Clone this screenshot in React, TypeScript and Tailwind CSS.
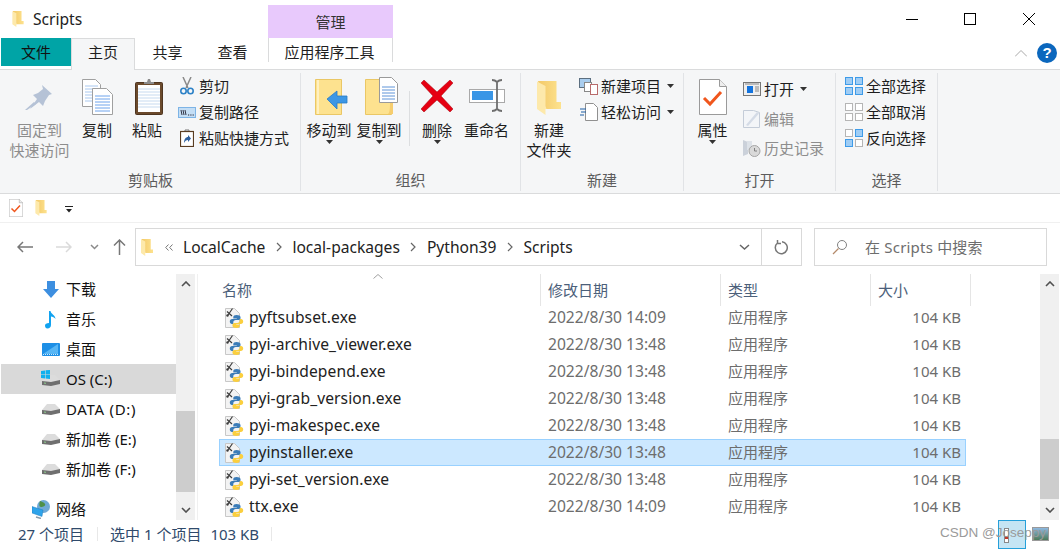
import React from "react";

const files = [
  { name: "pyftsubset.exe", date: "2022/8/30 14:09" },
  { name: "pyi-archive_viewer.exe", date: "2022/8/30 13:48" },
  { name: "pyi-bindepend.exe", date: "2022/8/30 13:48" },
  { name: "pyi-grab_version.exe", date: "2022/8/30 13:48" },
  { name: "pyi-makespec.exe", date: "2022/8/30 13:48" },
  { name: "pyinstaller.exe", date: "2022/8/30 13:48", selected: true },
  { name: "pyi-set_version.exe", date: "2022/8/30 13:48" },
  { name: "ttx.exe", date: "2022/8/30 14:09" },
];

const Caret = ({ className = "" }: { className?: string }) => (
  <svg width="7" height="4" viewBox="0 0 7 4" className={className}>
    <path d="M0 0h7L3.5 4z" fill="#333" />
  </svg>
);

const Folder = ({ w = 14, h = 18 }: { w?: number; h?: number }) => (
  <svg width={w} height={h} viewBox="0 0 24 34">
    <defs>
      <linearGradient id="folderBody" x1="0" y1="0" x2="1" y2="0">
        <stop offset="0" stopColor="#f3c968" />
        <stop offset="1" stopColor="#fde28e" />
      </linearGradient>
    </defs>
    <path d="M1 0h18.500v21H24v7H8z" fill="url(#folderBody)" />
    <path d="M0 .5l8.500 4.500v20l1 3H8.500V34L0 28z" fill="#fde9ab" />
  </svg>
);

const CheckDoc = ({ w = 28, h = 36 }: { w?: number; h?: number }) => (
  <svg width={w} height={h} viewBox="0 0 28 36">
    <path d="M.5.5h20l7 7v28H.5z" fill="#fff" stroke="#9a9a9a" />
    <path d="M20.5.5v7h7" fill="#eee" stroke="#9a9a9a" />
    <path d="M5 19l6 6L22 13" fill="none" stroke="#f0561d" strokeWidth="3" />
  </svg>
);

const snake =
  "M12.500 8c-2 0-3.200.7-3.200 2v1.500h3.500v.6H8.200c-1.500 0-2.400 1-2.400 2.500s.9 2.500 2.100 2.500h1.400v-1.800c0-1.200 1-2.200 2.400-2.200h3c1 0 1.800-.8 1.800-1.800V10c0-1.300-1.700-2-4-2z";

const PythonFile = () => (
  <svg width="20" height="22" viewBox="0 0 20 22" className="shrink-0">
    <path d="M1.500 1.500h9l5 5v14h-14z" fill="#f3f3f3" stroke="#c8c8c8" />
    <path d="M3 4.500l5 4.500M8.500 1.500L4 8" stroke="#3d3d3d" strokeWidth="1.200" fill="none" />
    <circle cx="3.500" cy="8.500" r="1.200" fill="#3d3d3d" />
    <path d={snake} fill="#3b7cb8" />
    <path d={snake} fill="#fbcf3e" transform="rotate(180 12.5 14.5)" />
  </svg>
);

const Drive = () => (
  <svg width="18" height="12" viewBox="0 0 18 12">
    <path d="M0 7L5 1h8l5 5v3H0z" fill="#dcdcdc" />
    <path d="M0 7l9 1 9-2v4l-9 2-9-1z" fill="#6f6f6f" />
    <path d="M2 9l2 .3" stroke="#8fd18f" strokeWidth="1" />
  </svg>
);

const BigButton = ({
  icon,
  label,
  caret,
  gray,
  width,
}: {
  icon: React.ReactNode;
  label: React.ReactNode;
  caret?: boolean;
  gray?: boolean;
  width: number;
}) => (
  <div className="flex flex-col items-center shrink-0" style={{ width }}>
    <div className="h-[47px] flex items-end justify-center pb-[5px]">{icon}</div>
    <div className={`text-center leading-[20px] whitespace-nowrap ${gray ? "text-[#8d8d8d]" : "text-[#1e1e1e]"}`}>
      {label}
    </div>
    {caret && <Caret />}
  </div>
);

const SmallRow = ({
  icon,
  label,
  caret,
  gray,
  rowClass = "h-[26px]",
}: {
  icon: React.ReactNode;
  label: string;
  caret?: boolean;
  gray?: boolean;
  rowClass?: string;
}) => (
  <div className={`flex items-center whitespace-nowrap ${rowClass} ${gray ? "text-[#8d8d8d]" : "text-[#1e1e1e]"}`}>
    <div className="w-[21px] shrink-0 flex items-center justify-center mr-[2px]">{icon}</div>
    <span>{label}</span>
    {caret && <Caret className="ml-[6px]" />}
  </div>
);

const Group = ({
  width,
  label,
  children,
}: {
  width: number;
  label: string;
  children: React.ReactNode;
}) => (
  <div className="flex flex-col shrink-0 h-[118px] border-r border-[#e1e3e6]" style={{ width }}>
    <div className="flex h-[96px]">{children}</div>
    <div className="h-[22px] flex items-center justify-center text-[#5c5c5c]">{label}</div>
  </div>
);

const Grid = ({ cells }: { cells: string[] }) => (
  <svg width="18" height="18" viewBox="0 0 18 18">
    {[0, 1, 2, 3].map((i) => (
      <rect
        key={i}
        x={i % 2 ? 10.5 : 0.5}
        y={i > 1 ? 10.5 : 0.5}
        width="7"
        height="7"
        fill={cells[i]}
        stroke={cells[i] === "#fff" ? "#b5b5b5" : "#3e9be8"}
      />
    ))}
  </svg>
);

const Scrollbar = ({ thumbTop, thumbHeight }: { thumbTop: number; thumbHeight: number }) => (
  <div className="w-[19px] shrink-0 h-full bg-[#f0f0f0] flex flex-col items-center relative">
    <svg width="10" height="6" viewBox="0 0 10 6" className="mt-[7px]">
      <path d="M1 5l4-4 4 4" fill="none" stroke="#505050" strokeWidth="1.600" />
    </svg>
    <div className="w-full bg-[#cdcdcd]" style={{ marginTop: thumbTop - 13, height: thumbHeight }} />
    <svg width="10" height="6" viewBox="0 0 10 6" className="mt-auto mb-[7px]">
      <path d="M1 1l4 4 4-4" fill="none" stroke="#505050" strokeWidth="1.600" />
    </svg>
  </div>
);

const NavItem = ({
  icon,
  label,
  selected,
  labelClass = "",
}: {
  icon: React.ReactNode;
  label: string;
  selected?: boolean;
  labelClass?: string;
}) => (
  <div className={`h-[30px] flex items-center shrink-0 pl-[41px] text-[#111] ${selected ? "bg-[#d9d9d9]" : ""}`}>
    <div className="w-[18px] shrink-0 flex justify-center">{icon}</div>
    <span className={`ml-[6px] whitespace-nowrap ${labelClass}`}>{label}</span>
  </div>
);

const Chevron = () => (
  <svg width="6" height="10" viewBox="0 0 6 10" className="mx-[10.5px] shrink-0">
    <path d="M1 1l4 4-4 4" fill="none" stroke="#666" strokeWidth="1.200" />
  </svg>
);

export default function App() {
  return (
    <div className="relative w-[1060px] h-[550px] overflow-hidden bg-white text-[15px] leading-[20px] font-['Noto_Sans','Noto_Sans_CJK_SC',sans-serif] text-[#1e1e1e] flex flex-col">
      {/* title bar */}
      <div className="h-[38px] shrink-0 flex items-start">
        <div className="flex items-center h-[38px] pl-[12px] w-[268px]">
          <Folder w={12} h={16} />
          <span className="ml-[9px] text-[#222] text-[15.6px]">Scripts</span>
        </div>
        <div className="mt-[5px] h-[33px] w-[125px] bg-[#e8c9fc] flex items-center justify-center text-[#333]">管理</div>
        <div className="ml-auto mr-[2px] flex w-[177px] h-[38px] items-start">
          <div className="w-[59px] flex justify-center pt-[19px] pl-[2px]"><div className="w-[12px] h-px bg-black" /></div>
          <div className="w-[59px] flex justify-center pt-[13px]"><div className="w-[12px] h-[12px] border border-black" /></div>
          <div className="w-[59px] flex justify-center pt-[13px]">
            <svg width="12" height="12" viewBox="0 0 12 12"><path d="M0 0l12 12M12 0L0 12" stroke="#000" strokeWidth="1" /></svg>
          </div>
        </div>
      </div>

      {/* tabs */}
      <div className="h-[32px] shrink-0 flex items-start border-b border-[#dadbdc] relative">
        <div className="ml-px w-[70px] h-[28px] bg-[#00a4a6] flex items-center justify-center text-[#111]">文件</div>
        <div className="w-[64px] h-[32px] bg-[#f5f6f7] border-x border-t border-[#dadbdc] flex items-center justify-center pb-[5px] -mb-px z-10">主页</div>
        <div className="w-[65px] h-[28px] flex items-center justify-center">共享</div>
        <div className="w-[65px] h-[28px] flex items-center justify-center">查看</div>
        <div className="ml-[3px] w-[125px] h-[24px] border-x border-[#dadbdc] flex items-center justify-center pt-[4px] pr-[2px]">应用程序工具</div>
        <div className="ml-auto flex items-center gap-[10px] mr-[3px] mt-[5px]">
          <svg width="12" height="7" viewBox="0 0 12 7"><path d="M0 6.5l6-6 6 6" fill="none" stroke="#a8a8a8" strokeWidth="1" /></svg>
          <div className="w-[20px] h-[20px] rounded-full bg-[#0b67bd] text-white flex items-center justify-center text-[15px] font-bold font-['Liberation_Sans',sans-serif]">?</div>
        </div>
      </div>

      {/* ribbon */}
      <div className="h-[124px] shrink-0 bg-[#f5f6f7] border-b border-[#dadbdc] flex pt-[3px] pl-[1px]">
        <Group width={300} label="剪贴板">
          <BigButton
            width={77}
            gray
            label={<>固定到<br />快速访问</>}
            icon={
              <svg width="30" height="27" viewBox="0 0 30 27" className="mb-[5px]">
                <path d="M17 2l10 9-3 1-4 6-2 5-4-4-9 7 7-10-4-4 5-2 5-4z" fill="#b5c2d6" />
                <path d="M0 27l9-8 2 2-9 6z" fill="#b5c2d6" />
              </svg>
            }
          />
          <BigButton
            width={38}
            label="复制"
            icon={
              <svg width="31" height="36" viewBox="0 0 31 36">
                <path d="M.5.5h13l5 5v22H.5z" fill="#fff" stroke="#a0a0a0" />
                <path d="M3 7h13M3 10h13M3 13h13M3 16h13M3 19h13M3 22h13" stroke="#a9c8ef" />
                <path d="M10.5 9.5h14l6 6v20h-20z" fill="#fff" stroke="#a0a0a0" />
                <path d="M13 17h15M13 20h15M13 23h15M13 26h15M13 29h15M13 32h15" stroke="#6ea4ec" />
              </svg>
            }
          />
          <BigButton
            width={62}
            label="粘贴"
            icon={
              <svg width="28" height="36" viewBox="0 0 28 36" className="ml-[3px]">
                <rect x="0.5" y="3.5" width="27" height="32" rx="1" fill="#6b4a2c" stroke="#4e3520" />
                <rect x="3" y="6" width="22" height="27" fill="#fff" />
                <path d="M3 10h22M3 13h22M3 16h22M3 19h22M3 22h22M3 25h22M3 28h22" stroke="#c7daef" />
                <path d="M9 5V3h3l1-3h2l1 3h3v2z" fill="#8c8c8c" />
              </svg>
            }
          />
          <div className="flex flex-col ml-[-2px]">
            <SmallRow
              label="剪切"
              icon={
                <svg width="14" height="18" viewBox="0 0 14 18">
                  <path d="M3 0l5 11M11 0L6 11" stroke="#8a8a8a" strokeWidth="1.5" />
                  <circle cx="3.5" cy="14" r="2.7" fill="none" stroke="#2d82c7" strokeWidth="1.6" />
                  <circle cx="10.5" cy="14" r="2.7" fill="none" stroke="#2d82c7" strokeWidth="1.6" />
                </svg>
              }
            />
            <SmallRow
              label="复制路径"
              icon={
                <svg width="18" height="11" viewBox="0 0 18 11">
                  <rect x="0.5" y="0.5" width="17" height="10" fill="#c4def5" stroke="#7db4e6" />
                  <path d="M3 3l1 5M5 3l1 5M7 3l1 5" stroke="#223" strokeWidth="0.9" />
                  <path d="M10 8h1.2M12.3 8h1.2M14.6 8h1.2" stroke="#223" />
                </svg>
              }
            />
            <SmallRow
              label="粘贴快捷方式"
              icon={
                <svg width="14" height="18" viewBox="0 0 14 18">
                  <rect x="0.5" y="2.5" width="13" height="15" fill="#fff" stroke="#5a3d22" strokeWidth="1.2" />
                  <path d="M5 2V1h4v1" stroke="#777" fill="none" />
                  <path d="M4 14c0-4 2-6 4-6V6l3 3.5L8 13v-2c-2 0-3 1-4 3z" fill="#2c5f9e" />
                </svg>
              }
            />
          </div>
        </Group>
        <Group width={220} label="组织">
          <div className="flex pl-[3px]">
            <BigButton
              width={50}
              caret
              label="移动到"
              icon={
                <svg width="33" height="36" viewBox="0 0 33 36" className="ml-[4px]">
                  <path d="M.5.5h26v35H.5z" fill="#fde28f" stroke="#eac765" />
                  <path d="M3 1v34" stroke="#fff0c0" strokeWidth="2" />
                  <path d="M12 20l10-8v5h10v7H22v6z" fill="#3d97e5" stroke="#2a7cc4" strokeWidth="0.8" />
                </svg>
              }
            />
            <BigButton
              width={50}
              caret
              label="复制到"
              icon={
                <svg width="33" height="38" viewBox="0 0 33 38" className="ml-[4px]">
                  <path d="M.5 2.5h26v35H.5z" fill="#fde28f" stroke="#eac765" />
                  <path d="M28 26v11h-5c2-1 2-8 2-11z" fill="#f6cd6e" />
                  <path d="M14.5.5h12l6 6v19h-18z" fill="#fff" stroke="#9a9a9a" />
                  <path d="M17 10h13M17 13h13M17 16h13M17 19h13M17 22h13" stroke="#5f94d8" />
                </svg>
              }
            />
            <div className="w-px h-[55px] bg-[#dcdee0] mt-[18px] ml-[5px] mr-[2px]" />
            <BigButton
              width={50}
              caret
              label="删除"
              icon={
                <svg width="32" height="32" viewBox="0 0 32 32" className="mb-[3px]">
                  <path d="M3 0l13 12L29 0l3 3-12 13 12 13-3 3-13-12L3 32l-3-3 12-13L0 3z" fill="#e60012" stroke="#a3000c" strokeWidth="0.5" />
                </svg>
              }
            />
            <BigButton
              width={49}
              label="重命名"
              icon={
                <svg width="37" height="33" viewBox="0 0 37 33" className="mb-[3px] ml-[2px]">
                  <rect x="0.5" y="10.5" width="35" height="13" fill="#fff" stroke="#a9a9a9" />
                  <rect x="3" y="12" width="21" height="9" fill="#3a96e6" />
                  <path d="M23 1c3 0 4 1 5 2 1-1 2-2 5-2M28 3v27M23 32c3 0 4-1 5-2 1 1 2 2 5 2" fill="none" stroke="#6e6e6e" strokeWidth="1.8" />
                </svg>
              }
            />
          </div>
        </Group>
        <Group width={163} label="新建">
          <BigButton
            width={56}
            label={<>新建<br />文件夹</>}
            icon={<Folder w={24} h={34} />}
          />
          <div className="flex flex-col ml-px">
            <SmallRow
              caret
              label="新建项目"
              icon={
                <svg width="19" height="17" viewBox="0 0 19 17">
                  <rect x="0.5" y="0.5" width="11" height="9" fill="#a9cdee" stroke="#5c6f80" />
                  <rect x="5.5" y="4.5" width="7" height="9" fill="#fff" stroke="#888" />
                  <rect x="11.5" y="6.5" width="7" height="10" fill="#fff" stroke="#b86b6b" />
                </svg>
              }
            />
            <SmallRow
              caret
              label="轻松访问"
              icon={
                <svg width="18" height="18" viewBox="0 0 18 18">
                  <path d="M5.5.5h8l4 4v13h-12z" fill="#fff" stroke="#909090" />
                  <path d="M0 6h6M1 9h5M0 12h4" stroke="#1f5fa5" strokeWidth="1.2" />
                </svg>
              }
            />
          </div>
        </Group>
        <Group width={152} label="打开">
          <BigButton width={57} caret label="属性" icon={<CheckDoc />} />
          <div className="flex flex-col pt-[1px]">
            <SmallRow
              caret
              rowClass="h-[30px]"
              label="打开"
              icon={
                <svg width="18" height="14" viewBox="0 0 18 14">
                  <rect x="0.5" y="0.5" width="17" height="13" fill="#eee" stroke="#777" />
                  <rect x="4" y="4" width="6" height="7" fill="#1273de" />
                  <path d="M12 5h4M12 7h4M12 9h4M2 2h14" stroke="#888" />
                </svg>
              }
            />
            <SmallRow
              gray
              rowClass="h-[29px]"
              label="编辑"
              icon={
                <svg width="17" height="18" viewBox="0 0 17 18">
                  <path d="M.5.5h10l6 2v15H.5z" fill="#f3f5f8" stroke="#c4ccd8" />
                  <path d="M3 15L14 2l2 1.5L5 16z" fill="#d4dbe6" />
                </svg>
              }
            />
            <SmallRow
              gray
              rowClass="h-[30px]"
              label="历史记录"
              icon={
                <svg width="18" height="18" viewBox="0 0 18 18">
                  <path d="M0 1l5 2v12l-5 2z" fill="#cbd1da" />
                  <path d="M4 2h5v9H4z" fill="#dde2e8" />
                  <circle cx="11.5" cy="12" r="5.5" fill="#d9d9d9" stroke="#a5a5a5" />
                  <path d="M11.5 9v3h2.5" fill="none" stroke="#808080" />
                </svg>
              }
            />
          </div>
        </Group>
        <Group width={102} label="选择">
          <div className="flex flex-col pl-[7px]">
            <SmallRow label="全部选择" icon={<Grid cells={["#9fcdf5", "#9fcdf5", "#9fcdf5", "#9fcdf5"]} />} />
            <SmallRow label="全部取消" icon={<Grid cells={["#fff", "#fff", "#fff", "#fff"]} />} />
            <SmallRow label="反向选择" icon={<Grid cells={["#fff", "#9fcdf5", "#9fcdf5", "#fff"]} />} />
          </div>
        </Group>
      </div>

      {/* quick access */}
      <div className="h-[29px] shrink-0 flex items-center border-b border-[#f0f0f0] pl-[9px]">
        <CheckDoc w={14} h={18} />
        <div className="ml-[12px]"><Folder w={12} h={16} /></div>
        <svg width="8" height="7" viewBox="0 0 8 7" className="ml-[18px] mt-[2px]">
          <path d="M0 .5h8" stroke="#222" />
          <path d="M1 3h6L4 6.5z" fill="#222" />
        </svg>
      </div>

      {/* address bar */}
      <div className="h-[38px] mt-[5px] shrink-0 flex items-center">
        <div className="flex items-center w-[135px] shrink-0 pl-[17px]">
          <svg width="16" height="12" viewBox="0 0 16 12"><path d="M6 1L1 6l5 5M1 6h15" fill="none" stroke="#777" strokeWidth="1.5" /></svg>
          <svg width="16" height="12" viewBox="0 0 16 12" className="ml-[23px]"><path d="M10 1l5 5-5 5M15 6H0" fill="none" stroke="#dadada" strokeWidth="1.5" /></svg>
          <svg width="9" height="6" viewBox="0 0 9 6" className="ml-[18px]"><path d="M1 1l3.5 3.5L8 1" fill="none" stroke="#8a8a8a" strokeWidth="1.5" /></svg>
          <svg width="13" height="16" viewBox="0 0 13 16" className="ml-[14px]"><path d="M1 6.5L6.5 1 12 6.5M6.5 1v15" fill="none" stroke="#777" strokeWidth="1.5" /></svg>
        </div>
        <div className="w-[667px] h-[38px] border border-[#d9d9d9] flex items-center shrink-0 text-[15.6px] text-[#222]">
          <div className="ml-[5px]"><Folder w={12} h={17} /></div>
          <svg width="8" height="7" viewBox="0 0 8 7" className="ml-[12px]"><path d="M3.5.5L.7 3.5l2.800 3M7.500.5L4.700 3.500l2.800 3" fill="none" stroke="#777" strokeWidth="1" /></svg>
          <span className="ml-[10px]">LocalCache</span>
          <Chevron />
          <span>local-packages</span>
          <Chevron />
          <span>Python39</span>
          <Chevron />
          <span>Scripts</span>
          <div className="ml-auto flex items-center h-full">
            <svg width="11" height="6" viewBox="0 0 11 6" className="mr-[11px]"><path d="M1 1l4.5 4L10 1" fill="none" stroke="#666" strokeWidth="1.5" /></svg>
            <div className="w-[40px] h-full border-l border-[#d9d9d9] flex items-center justify-center">
              <svg width="15" height="15" viewBox="0 0 15 15"><path d="M8 1.7A6 6 0 1 1 3.5 3M3.5 0v3.5H7" fill="none" stroke="#777" strokeWidth="1.5" /></svg>
            </div>
          </div>
        </div>
        <div className="ml-[12px] w-[233px] h-[38px] border border-[#d9d9d9] flex items-center pl-[17px] text-[#6d6d6d] shrink-0">
          <svg width="16" height="16" viewBox="0 0 16 16"><circle cx="10" cy="6" r="4.5" fill="none" stroke="#808080" /><path d="M6.5 9.5L1 15" stroke="#b48a6a" strokeWidth="1.2" /></svg>
          <span className="ml-[17px] tracking-[0.2px]">在 Scripts 中搜索</span>
        </div>
      </div>

      {/* body */}
      <div className="h-[246px] mt-[8px] shrink-0 flex">
        <div className="w-[176px] shrink-0 flex flex-col overflow-hidden pl-px">
          <NavItem
            label="下载"
            icon={<svg width="16" height="17" viewBox="0 0 16 17"><path d="M4 0h8v8h4l-8 9-8-9h4z" fill="#3d8fe0" /></svg>}
          />
          <NavItem
            label="音乐"
            icon={<svg width="12" height="19" viewBox="0 0 12 19"><path d="M4 1h1.5c.3 3 5 4 5 8-1-1.500-3-2.500-4.500-2.500V15c0 2-1.500 3.500-3.500 3.500S0 17 0 15.500 1.500 13 4 13z" fill="#12a3f0" /></svg>}
          />
          <NavItem
            label="桌面"
            icon={<svg width="18" height="13" viewBox="0 0 18 13"><rect width="18" height="13" rx="1" fill="#1d8fe6" /><path d="M1 11L16 1v10z" fill="#57b6f5" /><path d="M1 11.5h16" stroke="#cfeafc" strokeDasharray="1 1" /></svg>}
          />
          <NavItem
            selected
            label="OS (C:)"
            icon={
              <div className="relative w-[18px] h-[14px]">
                <div className="absolute left-0 bottom-0"><Drive /></div>
                <svg width="9" height="9" viewBox="0 0 9 9" className="absolute -left-[1px] -top-[2px]"><path d="M0 1l4-.6V4H0zM4.600.3L9 0v4H4.600zM0 4.600h4v3.800l-4-.5zM4.600 4.600H9V9l-4.400-.6z" fill="#10b0ee" /></svg>
              </div>
            }
          />
          <NavItem label="DATA (D:)" labelClass="tracking-[0.7px]" icon={<Drive />} />
          <NavItem label="新加卷 (E:)" icon={<Drive />} />
          <NavItem label="新加卷 (F:)" icon={<Drive />} />
          <div className="h-[30px] mt-[10px] flex items-center pl-[31px] shrink-0">
            <svg width="19" height="19" viewBox="0 0 19 19">
              <circle cx="11.500" cy="6.500" r="6.500" fill="#6fa9d6" />
              <path d="M8 1c2 1 4 1 5 3s-2 3-4 3-2-3-1-6z" fill="#4f9048" />
              <path d="M0 6.500l11 3.500-1 6.500L0 13z" fill="#2ea3ea" stroke="#1f7fc0" strokeWidth="0.500" />
              <path d="M4 17l5 1.500" stroke="#8a9aa8" strokeWidth="1.500" />
            </svg>
            <span className="ml-[5px] text-[#111]">网络</span>
          </div>
        </div>
        <Scrollbar thumbTop={137} thumbHeight={81} />
        <div className="w-[3px] shrink-0 border-r border-[#f0f0f0]" />

        <div className="flex-1 min-w-0 pl-[21px] relative">
          <div className="h-[30px] flex text-[#4c607a]">
            <div className="w-[322px] h-[32px] pl-[3px] flex items-center relative border-r border-[#e5e5e5]">
              名称
              <svg width="10" height="5" viewBox="0 0 10 5" className="absolute left-[154px] top-0"><path d="M.5 4.5L5 .5l4.5 4" fill="none" stroke="#a0a0a0" /></svg>
            </div>
            <div className="w-[180px] h-[32px] pl-[7px] flex items-center border-r border-[#e5e5e5]">修改日期</div>
            <div className="w-[150px] h-[32px] pl-[7px] flex items-center border-r border-[#e5e5e5]">类型</div>
            <div className="w-[100px] h-[32px] pl-[7px] flex items-center border-r border-[#e5e5e5]">大小</div>
          </div>
          {files.map((file) => (
            <div
              key={file.name}
              className={`h-[27px] w-[747px] flex items-center border ${file.selected ? "bg-[#cce8ff] border-[#99d1ff]" : "border-transparent"}`}
            >
              <div className="w-[29px] pl-[4px] shrink-0"><PythonFile /></div>
              <div className="w-[299px] shrink-0 text-[#222] text-[15.6px] tracking-[0.1px] whitespace-nowrap mb-[2px]">{file.name}</div>
              <div className="w-[180px] shrink-0 text-[#6d6d6d] text-[15.6px] whitespace-nowrap mb-[2px]">{file.date}</div>
              <div className="w-[120px] shrink-0 text-[#6d6d6d] mb-[2px]">应用程序</div>
              <div className="w-[113px] shrink-0 text-right text-[#6d6d6d] whitespace-nowrap mb-[2px]">104 KB</div>
            </div>
          ))}
        </div>
        <Scrollbar thumbTop={165} thumbHeight={60} />
        <div className="w-px shrink-0" />
      </div>

      {/* status bar */}
      <div className="flex-1 flex items-center pl-[18px] text-[#2f4a6b] pb-[2px]">
        <span className="w-[79px]">27 个项目</span>
        <div className="w-px h-[14px] bg-[#e8e8e8]" />
        <span className="ml-[12px]">选中 1 个项目</span>
        <span className="ml-[9px]">103 KB</span>
        <div className="w-px h-[14px] bg-[#e8e8e8] ml-[12px]" />
      </div>

      {/* watermark + view toggles */}
      <div className="absolute left-[998px] top-[520px] w-[28px] h-[29px] bg-[#c5e5f4] border border-[#26a0da]" />
      <div className="absolute left-[1004px] top-[528px] w-[5px] h-[15px] bg-white border border-[#888]">
        <div className="w-[3px] h-[3px] bg-[#c0392b] mt-[7px]" />
      </div>
      <div className="absolute left-[1032px] top-[527px] w-[17px] h-[14px] border border-[#999] bg-[linear-gradient(#8db8e0,#4c7a5a)]" />
      <div className="absolute left-[940px] top-[523px] text-[13.5px] text-[#9a9a9a] whitespace-nowrap font-['Liberation_Sans',sans-serif]">
        CSDN @Joseppy
      </div>
    </div>
  );
}
